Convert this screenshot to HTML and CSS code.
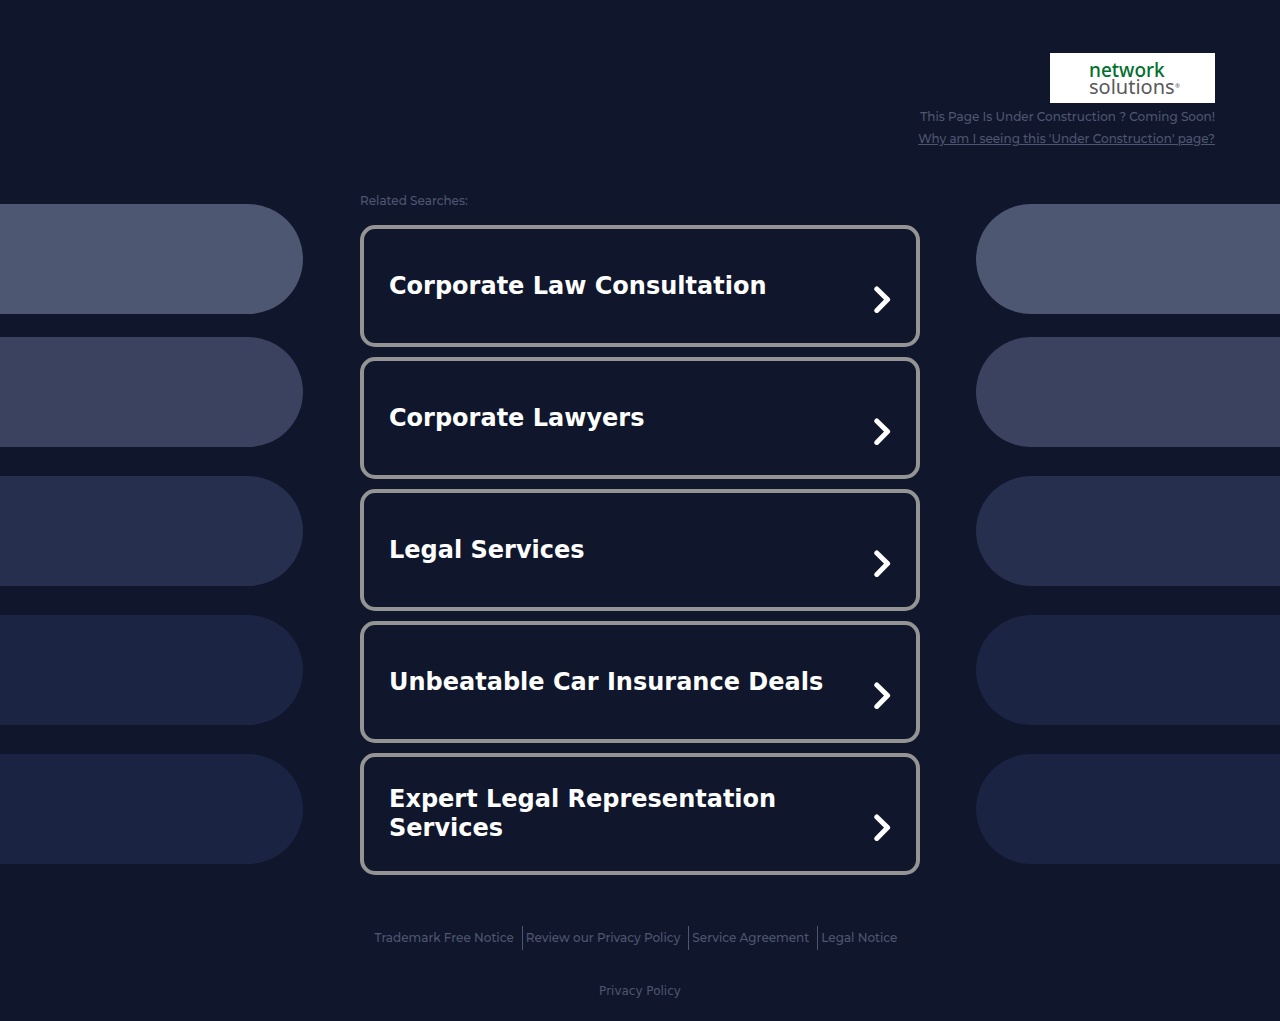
FILE: index.html
```html
<!DOCTYPE html>
<html lang="en">
<head>
<meta charset="utf-8">
<meta name="viewport" content="width=device-width, initial-scale=1">
<title>Under Construction</title>
<link rel="stylesheet" href="styles.css">
</head>
<body>
<svg class="sprite" aria-hidden="true">
  <symbol id="chevron" viewBox="0 0 18 28"><path d="M3.8 3 14.6 13.6 3.8 24.4" fill="none" stroke="#fff" stroke-width="5" stroke-linecap="round" stroke-linejoin="round"/></symbol>
</svg>
<header class="header">
  <svg class="logo" viewBox="0 0 165 50" role="img" aria-label="network solutions">
    <text class="logo-network" x="39" y="24">network</text>
    <text class="logo-solutions" x="39" y="41">solutions</text>
    <text class="logo-mark" x="125" y="35">®</text>
  </svg>
  <p class="notice">This Page Is Under Construction ? Coming Soon!</p>
  <a class="notice" href="#">Why am I seeing this 'Under Construction' page?</a>
</header>
<div class="content">
  <div class="pills pills-left" aria-hidden="true">
    <div class="pill tone-1"></div><div class="pill tone-2"></div><div class="pill tone-3"></div><div class="pill tone-4"></div><div class="pill tone-5"></div>
  </div>
  <main class="searches">
    <h1 class="label">Related Searches:</h1>
    <nav class="cards" aria-label="Related searches">
      <a class="card" href="#"><span class="card-title">Corporate Law Consultation</span><svg class="chevron" aria-hidden="true"><use href="#chevron"/></svg></a>
      <a class="card" href="#"><span class="card-title">Corporate Lawyers</span><svg class="chevron" aria-hidden="true"><use href="#chevron"/></svg></a>
      <a class="card" href="#"><span class="card-title">Legal Services</span><svg class="chevron" aria-hidden="true"><use href="#chevron"/></svg></a>
      <a class="card" href="#"><span class="card-title">Unbeatable Car Insurance Deals</span><svg class="chevron" aria-hidden="true"><use href="#chevron"/></svg></a>
      <a class="card" href="#"><span class="card-title">Expert Legal Representation Services</span><svg class="chevron" aria-hidden="true"><use href="#chevron"/></svg></a>
    </nav>
  </main>
  <div class="pills pills-right" aria-hidden="true">
    <div class="pill tone-1"></div><div class="pill tone-2"></div><div class="pill tone-3"></div><div class="pill tone-4"></div><div class="pill tone-5"></div>
  </div>
</div>
<footer class="footer">
  <nav class="links" aria-label="Legal">
    <a class="link" href="#">Trademark Free Notice</a>
    <a class="link" href="#">Review our Privacy Policy</a>
    <a class="link" href="#">Service Agreement</a>
    <a class="link" href="#">Legal Notice</a>
  </nav>
  <a class="privacy" href="#">Privacy Policy</a>
</footer>
</body>
</html>
```
FILE: styles.css
```css
* { box-sizing: border-box; }
body {
  margin: 0;
  background: #10162b;
  color: #4e5772;
  font-family: Montserrat, Inter, sans-serif;
  font-size: 12px;
  font-weight: 500;
  line-height: 22px;
}
a { color: inherit; text-decoration: none; }
.sprite { display: block; width: 0; height: 0; }

.header {
  display: flex;
  flex-direction: column;
  align-items: flex-end;
  padding: 53px 65px 0;
}
.logo {
  width: 165px;
  height: 50px;
  margin-bottom: 3px;
  background: #fff;
  font-family: "Noto Sans", sans-serif;
  font-weight: 400;
}
.logo-network { fill: #00702c; font-size: 19px; font-weight: 500; }
.logo-solutions { fill: #58595b; font-size: 20px; }
.logo-mark { fill: #58595b; font-size: 6px; }
.notice { margin: 0; }
a.notice { text-decoration: underline; }

.content {
  display: grid;
  grid-template-columns: 1fr minmax(0, 560px) 1fr;
  column-gap: 56px;
  padding-top: 40px;
}
.pills {
  display: flex;
  flex-direction: column;
  gap: 29px;
  padding-top: 14px;
}
.pill { height: 110px; }
.pill:first-child { margin-bottom: -6px; }
.pills-left { padding-right: 1px; }
.pills-left .pill { border-radius: 0 55px 55px 0; }
.pills-right .pill { border-radius: 55px 0 0 55px; }
.tone-1 { background: #4e5772; }
.tone-2 { background: #3a425f; }
.tone-3 { background: #262f4d; }
.tone-4 { background: #1b2442; }
.tone-5 { background: #1a2341; }

.label {
  margin: 0 0 13px;
  font-size: 12px;
  font-weight: 500;
  line-height: 22px;
}
.cards { display: flex; flex-direction: column; gap: 10px; }
.card {
  display: flex;
  align-items: center;
  justify-content: space-between;
  gap: 40px;
  min-height: 122px;
  padding: 0 25px;
  border: 4px solid #949494;
  border-radius: 15px;
  color: #fff;
  font-family: "DejaVu Sans", sans-serif;
  font-size: 24px;
  font-weight: 700;
  line-height: 29px;
}
.chevron { flex: none; width: 18px; height: 28px; margin-top: 28px; }

.footer {
  display: flex;
  flex-direction: column;
  align-items: center;
  gap: 30px;
  padding: 51px 16px 19px;
}
.links {
  display: flex;
  flex-wrap: wrap;
  justify-content: center;
  padding-right: 3px;
  line-height: 24px;
}
.link { padding: 0 8px 0 3px; }
.link + .link { border-left: 1px solid #4e5772; }
.privacy { font-family: "DejaVu Sans", sans-serif; font-weight: 400; }

@media (max-width: 900px) {
  .content { grid-template-columns: minmax(0, 560px); justify-content: center; padding-inline: 16px; }
  .pills { display: none; }
}
```
